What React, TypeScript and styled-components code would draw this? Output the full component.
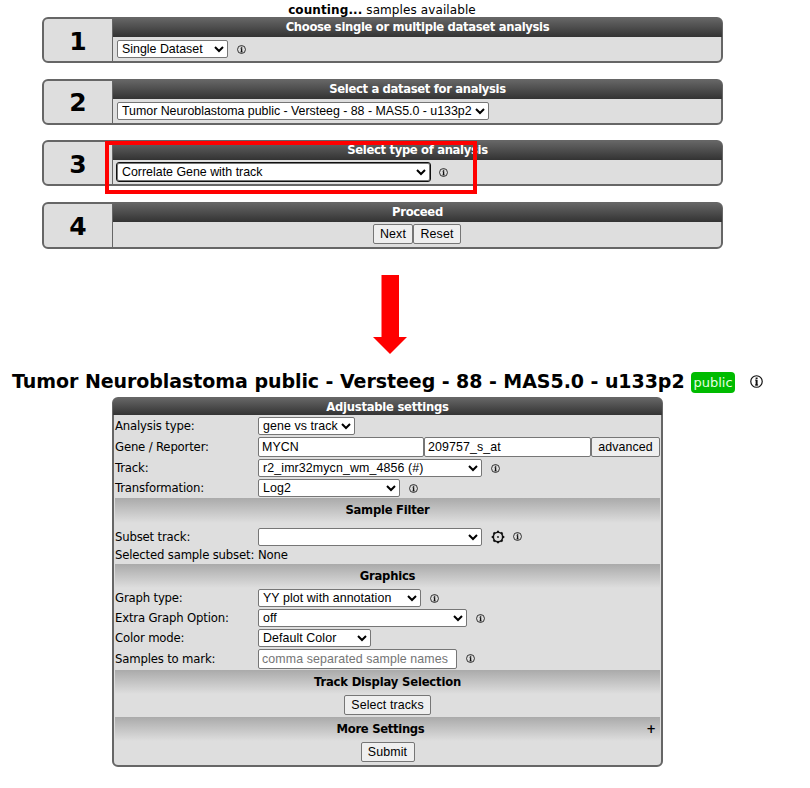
import React from "react";
import styled, { createGlobalStyle } from "styled-components";

const GlobalStyle = createGlobalStyle`
  * { box-sizing: border-box; }
  body { margin: 0; background: #fff; }
`;

const Page = styled.div`
  width: 810px;
  height: 788px;
  overflow: hidden;
  background: #fff;
  color: #000;
  font: 12px/16px "DejaVu Sans", Verdana, sans-serif;
`;

const Text = styled.span<{ $ls?: number }>`
  white-space: nowrap;
  letter-spacing: ${(p) => p.$ls ?? 0}px;
`;

const Counter = styled.div`
  width: 764px;
  height: 17px;
  padding-top: 2px;
  text-align: center;
`;

const Steps = styled.div`
  width: 681px;
  margin-left: 42px;
  display: grid;
  grid-template-rows: 46px 46px 46px 47px;
  row-gap: 15.5px;
`;

const StepBox = styled.section`
  position: relative;
  display: grid;
  grid-template-columns: 69px 1fr;
  border: 2px solid #666;
  border-radius: 6px;
  background: #dedede;
`;

const StepNumber = styled.div`
  display: flex;
  align-items: center;
  justify-content: center;
  padding-top: 3px;
  border-right: 1px solid #666;
  font-size: 25px;
  font-weight: bold;
`;

const StepBody = styled.div`
  display: flex;
  flex-direction: column;
  min-width: 0;
`;

const DarkBar = styled.div<{ $round?: boolean }>`
  height: ${(p) => (p.$round ? 17 : 19)}px;
  margin: -1px -1px 0 ${(p) => (p.$round ? "-1px" : "0")};
  border-radius: ${(p) => (p.$round ? "5px 5px 0 0" : "0 5px 0 0")};
  background: linear-gradient(#666, #333);
  color: #fff;
  font-size: 11.6px;
  font-weight: bold;
  line-height: ${(p) => (p.$round ? 18 : 19)}px;
  text-align: center;
`;

const StepContent = styled.div<{ $center?: boolean }>`
  flex: 1;
  display: flex;
  align-items: center;
  justify-content: ${(p) => (p.$center ? "center" : "flex-start")};
  padding-left: ${(p) => (p.$center ? 0 : 4)}px;
`;

const Select = styled.select<{ $w: number; $focus?: boolean; $ls?: number }>`
  width: ${(p) => p.$w}px;
  height: 18px;
  margin: 0;
  padding: 0;
  flex: none;
  border: 1px solid #767676;
  border-radius: 2px;
  outline: ${(p) => (p.$focus ? "1px solid #101010" : "none")};
  background: #fff;
  color: #000;
  font: 12.4px "Liberation Sans", Arial, sans-serif;
  letter-spacing: ${(p) => p.$ls ?? 0}px;
`;

const Input = styled.input<{ $w: number }>`
  width: ${(p) => p.$w}px;
  height: 20px;
  margin: 0;
  padding: 0 3px;
  border: 1px solid #767676;
  border-radius: 2px;
  background: #fff;
  color: #000;
  font: 12.4px "Liberation Sans", Arial, sans-serif;
  letter-spacing: 0.1px;
  &::placeholder { color: #757575; }
`;

const Button = styled.button<{ $w: number }>`
  width: ${(p) => p.$w}px;
  height: 20px;
  margin: 0;
  padding: 0;
  border: 1px solid #767676;
  border-radius: 2px;
  background: #efefef;
  color: #000;
  font: 12.4px "Liberation Sans", Arial, sans-serif;
  letter-spacing: 0.12px;
  white-space: nowrap;
`;

const Highlight = styled.div`
  position: absolute;
  left: 61px;
  top: -1px;
  width: 372px;
  height: 53px;
  border: 4px solid #f00;
`;

const ArrowSvg = styled.svg`
  display: block;
  margin: 26.5px 0 0 372px;
`;

const Title = styled.h1`
  display: flex;
  align-items: center;
  height: 24px;
  margin: 14px 0 0 12px;
  font-size: 19px;
  line-height: 24px;
`;

const TitleText = styled(Text)`
  width: 679px;
`;

const Badge = styled.span`
  width: 44px;
  height: 21px;
  margin: 2px 15px 0 0;
  border-radius: 4px;
  background: #0b0;
  color: #e4ffe0;
  font-size: 13px;
  font-weight: normal;
  line-height: 22px;
  text-align: center;
`;

const Panel = styled.section`
  width: 551px;
  height: 370px;
  margin: 4px 0 0 112px;
  border: 2px solid #666;
  border-radius: 6px;
  background: #dedede;
`;

const Section = styled.div<{ $h: number }>`
  position: relative;
  display: flex;
  justify-content: center;
  height: ${(p) => p.$h}px;
  margin: 0 1px;
  background: linear-gradient(#aaa, #dedede);
  font-size: 11.6px;
  font-weight: bold;
  line-height: ${(p) => p.$h}px;
`;

const SectionTitle = styled(Text)<{ $shift?: number }>`
  margin-right: ${(p) => p.$shift ?? 0}px;
`;

const Toggle = styled.span`
  position: absolute;
  right: 4px;
`;

const Row = styled.div<{ $h: number; $pt?: number }>`
  display: grid;
  grid-template-columns: 143px 1fr;
  align-items: center;
  height: ${(p) => p.$h}px;
  padding: ${(p) => p.$pt ?? 0}px 0 0 1px;
  font-size: 11.7px;
`;

const Field = styled.div`
  display: flex;
  align-items: center;
`;

const Centered = styled.div<{ $h: number }>`
  display: flex;
  align-items: center;
  justify-content: center;
  height: ${(p) => p.$h}px;
  padding-bottom: 1px;
`;

const IconSvg = styled.svg<{ $ml?: number }>`
  display: block;
  flex: none;
  margin-left: ${(p) => p.$ml ?? 0}px;
`;

const InfoIcon = ({ size = 9, ml = 9 }: { size?: number; ml?: number }) => (
  <IconSvg $ml={ml} width={size} height={size} viewBox="0 0 12 12" fill="none" stroke="#111">
    <circle cx="6" cy="6" r="5.3" strokeWidth="1.1" />
    <path d="M4.8 4.7H6M4.6 9.2H7.5" strokeWidth="0.9" />
    <path d="M6.1 2.2V3.6M6.1 4.3V9.6" strokeWidth="1.8" />
  </IconSvg>
);

const GearIcon = () => (
  <IconSvg $ml={9} width="14" height="14" viewBox="0 0 14 14" fill="none" stroke="#111">
    <circle cx="7" cy="7" r="4.7" strokeWidth="1.6" />
    <g strokeWidth="2">
      {[0, 45, 90, 135, 180, 225, 270, 315].map((a) => (
        <path key={a} d="M7 2.4V.7" transform={`rotate(${a} 7 7)`} />
      ))}
    </g>
    <circle cx="7" cy="7" r="0.9" fill="#111" stroke="none" />
  </IconSvg>
);

type DropProps = { value: string; w: number; focus?: boolean; ls?: number };
const Drop = ({ value, w, focus, ls = 0.08 }: DropProps) => (
  <Select $w={w} $focus={focus} $ls={ls} defaultValue={value}>
    <option value={value}>{value}</option>
  </Select>
);

type StepProps = { n: number; title: string; center?: boolean; children: React.ReactNode; overlay?: React.ReactNode };
const Step = ({ n, title, center, children, overlay }: StepProps) => (
  <StepBox>
    <StepNumber>{n}</StepNumber>
    <StepBody>
      <DarkBar><Text $ls={-0.33}>{title}</Text></DarkBar>
      <StepContent $center={center}>{children}</StepContent>
    </StepBody>
    {overlay}
  </StepBox>
);

type SettingProps = { label: string; h: number; pt?: number; children: React.ReactNode };
const Setting = ({ label, h, pt, children }: SettingProps) => (
  <Row $h={h} $pt={pt}>
    <Text $ls={-0.18}>{label}</Text>
    <Field>{children}</Field>
  </Row>
);

export default function App() {
  return (
    <Page>
      <GlobalStyle />
      <Counter><Text $ls={0.1}><b>counting...</b> samples available</Text></Counter>
      <Steps>
        <Step n={1} title="Choose single or multiple dataset analysis">
          <Drop value="Single Dataset" w={111} ls={0} />
          <InfoIcon />
        </Step>
        <Step n={2} title="Select a dataset for analysis">
          <Drop value="Tumor Neuroblastoma public - Versteeg - 88 - MAS5.0 - u133p2" w={372} ls={-0.02} />
        </Step>
        <Step n={3} title="Select type of analysis" overlay={<Highlight />}>
          <Drop value="Correlate Gene with track" w={313} focus ls={0} />
          <InfoIcon />
        </Step>
        <Step n={4} title="Proceed" center>
          <Button $w={40}>Next</Button>
          <Button $w={48}>Reset</Button>
        </Step>
      </Steps>
      <ArrowSvg width="36" height="80" viewBox="0 0 36 80">
        <path d="M9.5 0H27V62H35L18 79L1 62H9.5Z" fill="#f00" />
      </ArrowSvg>
      <Title>
        <TitleText $ls={-0.06}>Tumor Neuroblastoma public - Versteeg - 88 - MAS5.0 - u133p2</TitleText>
        <Badge>public</Badge>
        <InfoIcon size={13} ml={0} />
      </Title>
      <Panel>
        <DarkBar $round><Text $ls={-0.25}>Adjustable settings</Text></DarkBar>
        <Setting label="Analysis type:" h={22}><Drop value="gene vs track" w={97} /></Setting>
        <Setting label="Gene / Reporter:" h={20}>
          <Input $w={166} defaultValue="MYCN" />
          <Input $w={167} defaultValue="209757_s_at" />
          <Button $w={69}>advanced</Button>
        </Setting>
        <Setting label="Track:" h={21} pt={1}><Drop value="r2_imr32mycn_wm_4856 (#)" w={224} ls={0.12} /><InfoIcon /></Setting>
        <Setting label="Transformation:" h={20}><Drop value="Log2" w={142} /><InfoIcon /></Setting>
        <Section $h={25}><SectionTitle $ls={-0.25}>Sample Filter</SectionTitle></Section>
        <Setting label="Subset track:" h={23} pt={4}><Drop value="" w={224} /><GearIcon /><InfoIcon ml={8} /></Setting>
        <Setting label="Selected sample subset:" h={18}><Text $ls={-0.16}>None</Text></Setting>
        <Section $h={24}><SectionTitle $ls={-0.25}>Graphics</SectionTitle></Section>
        <Setting label="Graph type:" h={20}><Drop value="YY plot with annotation" w={163} /><InfoIcon /></Setting>
        <Setting label="Extra Graph Option:" h={20}><Drop value="off" w={209} /><InfoIcon /></Setting>
        <Setting label="Color mode:" h={19}><Drop value="Default Color" w={113} /></Setting>
        <Setting label="Samples to mark:" h={23}><Input $w={199} placeholder="comma separated sample names" /><InfoIcon /></Setting>
        <Section $h={24}><SectionTitle $ls={-0.18}>Track Display Selection</SectionTitle></Section>
        <Centered $h={23}><Button $w={87}>Select tracks</Button></Centered>
        <Section $h={24}><SectionTitle $ls={-0.3} $shift={14}>More Settings</SectionTitle><Toggle>+</Toggle></Section>
        <Centered $h={23}><Button $w={54}>Submit</Button></Centered>
      </Panel>
    </Page>
  );
}
